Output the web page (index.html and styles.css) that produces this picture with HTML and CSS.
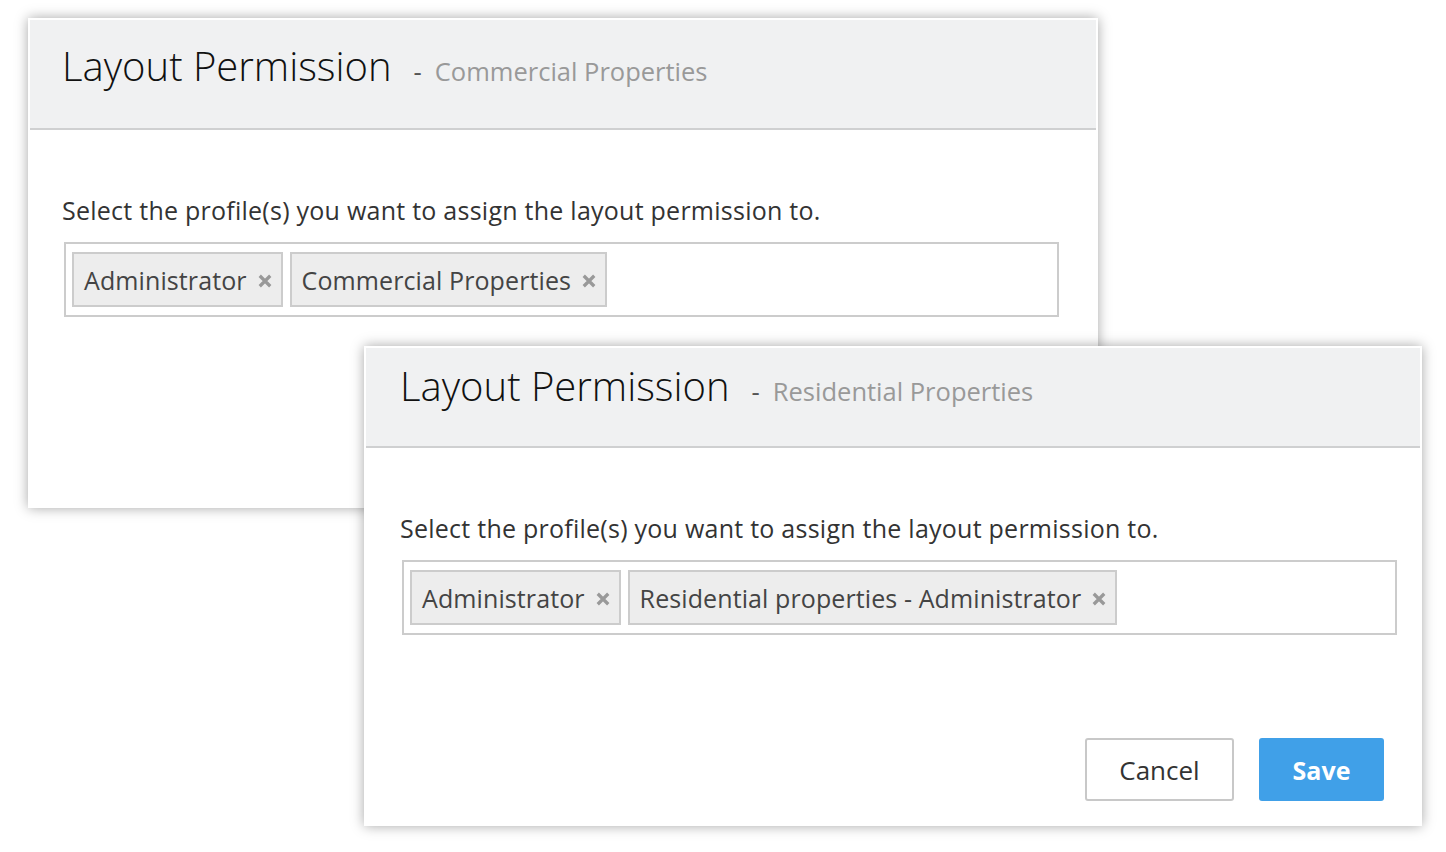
FILE: index.html
```html
<!DOCTYPE html>
<html>
<head>
<meta charset="utf-8">
<link rel="stylesheet" href="styles.css">
</head>
<body>
<div class="canvas">
  <div class="dialog d1">
    <div class="head">
      <span class="title">Layout Permission</span>
      <span class="sub"><span class="dash">-</span>Commercial Properties</span>
    </div>
    <div class="body">
      <p class="label">Select the profile(s) you want to assign the layout permission to.</p>
      <div class="field">
        <span class="tag">Administrator <svg class="x" viewBox="0 0 12 12"><path d="M1.5 1.5L10.5 10.5M10.5 1.5L1.5 10.5"/></svg></span>
        <span class="tag">Commercial Properties <svg class="x" viewBox="0 0 12 12"><path d="M1.5 1.5L10.5 10.5M10.5 1.5L1.5 10.5"/></svg></span>
      </div>
    </div>
  </div>
  <div class="dialog d2">
    <div class="head">
      <span class="title">Layout Permission</span>
      <span class="sub"><span class="dash">-</span>Residential Properties</span>
    </div>
    <div class="body">
      <p class="label">Select the profile(s) you want to assign the layout permission to.</p>
      <div class="field">
        <span class="tag">Administrator <svg class="x" viewBox="0 0 12 12"><path d="M1.5 1.5L10.5 10.5M10.5 1.5L1.5 10.5"/></svg></span>
        <span class="tag">Residential properties - Administrator <svg class="x" viewBox="0 0 12 12"><path d="M1.5 1.5L10.5 10.5M10.5 1.5L1.5 10.5"/></svg></span>
      </div>
      <div class="actions">
        <button class="btn cancel">Cancel</button>
        <button class="btn save">Save</button>
      </div>
    </div>
  </div>
</div>
</body>
</html>
```
FILE: styles.css
```css
html, body {
  margin: 0;
  padding: 0;
  background: #fff;
}
body {
  font-family: "Open Sans", Lato, sans-serif;
  color: #333;
}
.canvas {
  position: relative;
  width: 1446px;
  height: 852px;
  overflow: hidden;
}
.dialog {
  position: absolute;
  background: #fff;
  border: 2px solid #fff;
  box-sizing: border-box;
  box-shadow: 0 0 12px rgba(0, 0, 0, 0.35);
  display: flex;
  flex-direction: column;
}
.d1 { left: 28px; top: 18px; width: 1070px; height: 490px; }
.d2 { left: 364px; top: 346px; width: 1058px; height: 480px; }
.head {
  background: #f0f1f2;
  border-bottom: 2px solid #cfd0d1;
  display: flex;
  align-items: baseline;
  box-sizing: border-box;
  flex-shrink: 0;
}
.d1 .head { height: 110px; padding: 18px 0 0 32px; }
.d2 .head { height: 100px; padding: 10px 0 0 34px; }
.title {
  font-weight: 300;
  font-size: 40px;
  color: #111;
}
.sub {
  margin-left: 22px;
  font-size: 25.5px;
  color: #999;
  font-weight: 400;
}
.dash {
  color: #555;
  margin-right: 13px;
}
.d1 .body { padding-left: 32px; }
.d2 .body { padding-left: 34px; }
.label {
  margin: 0;
  font-size: 25px;
  letter-spacing: 0.25px;
  color: #333;
}
.d1 .label { margin-top: 63px; }
.d2 .label { margin-top: 63px; }
.field {
  margin-top: 15px;
  margin-left: 2px;
  width: 995px;
  height: 75px;
  box-sizing: border-box;
  border: 2px solid #ccc;
  display: flex;
  align-items: center;
  gap: 7px;
  padding: 0 6px;
  flex-shrink: 0;
}
.tag {
  display: inline-flex;
  align-items: center;
  height: 55px;
  box-sizing: border-box;
  background: #ededed;
  border: 2px solid #ccc;
  padding: 0 9px 0 10px;
  font-size: 25px;
  letter-spacing: 0.1px;
  color: #444;
}
.x {
  width: 14px;
  height: 14px;
  margin-left: 11px;
  margin-top: 3px;
  fill: none;
  stroke: #999;
  stroke-width: 2.8;
}
.actions {
  display: flex;
  justify-content: flex-end;
  gap: 25px;
  margin-top: 103px;
  padding-right: 36px;
}
.btn {
  font-family: "Open Sans", Lato, sans-serif;
  height: 63px;
  font-size: 26px;
  border-radius: 3px;
  box-sizing: border-box;
  cursor: pointer;
}
.cancel {
  width: 149px;
  background: #fff;
  border: 2px solid #c8c8c8;
  color: #333;
}
.save {
  width: 125px;
  background: #40a0e8;
  border: none;
  color: #fff;
  font-weight: 700;
  font-size: 25px;
}
```
